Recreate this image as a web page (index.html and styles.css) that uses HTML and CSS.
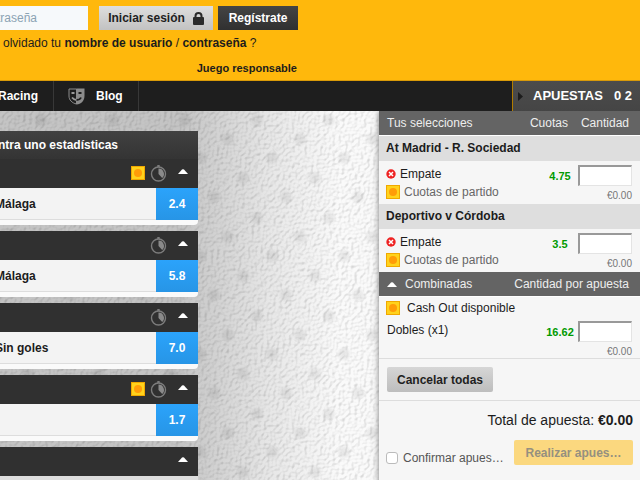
FILE: index.html
```html
<!DOCTYPE html>
<html lang="es">
<head>
    <meta charset="UTF-8">
    <title>Apuestas</title>
    <link rel="stylesheet" href="styles.css">
</head>
<body>
<svg class="defs" width="0" height="0" aria-hidden="true">
    <symbol id="cash" viewBox="0 0 14 14">
        <rect width="14" height="14" fill="#f0a800"/>
        <rect x="1" y="1" width="12" height="12" fill="#ffd21c"/>
        <circle cx="7" cy="7" r="4" fill="#ff9c08"/>
    </symbol>
    <symbol id="clock" viewBox="0 0 17 17">
        <circle cx="8.5" cy="9" r="7" fill="none" stroke="#7c7c7c" stroke-width="1.4"/>
        <path d="M7.3 0h2.4v2H7.3z" fill="#7c7c7c"/>
        <path d="M8.5 9V3.6A5.4 5.4 0 0 1 12.2 13z" fill="#8a8a8a"/>
    </symbol>
    <symbol id="up" viewBox="0 0 10 5"><path d="M0 5l4-4.400q1-.9 2 0L10 5z" fill="#fff"/></symbol>
    <symbol id="remove" viewBox="0 0 10 10">
        <circle cx="5" cy="5" r="4.700" fill="#ee2222"/>
        <path d="M3 3l4 4M7 3l-4 4" stroke="#fff" stroke-width="1.500"/>
    </symbol>
</svg>

<header class="header">
    <form class="login">
        <input class="password" type="text" placeholder="Contraseña" aria-label="Contraseña">
        <button class="btn btn-login" type="button">Iniciar sesión
            <svg width="11" height="13" viewBox="0 0 11 13"><path d="M2.500 6V4a3 3 0 0 1 6 0v2" fill="none" stroke="#2a2a2a" stroke-width="2"/><rect y="5" width="11" height="8" rx="1" fill="#2a2a2a"/></svg>
        </button>
        <button class="btn btn-join" type="button">Regístrate</button>
    </form>
    <p class="forgot">olvidado tu <a href="#">nombre de usuario</a> / <a href="#">contraseña</a> ?</p>
    <p class="responsible"><a href="#">Juego responsable</a></p>
</header>

<nav class="nav">
    <a class="nav-item" href="#">Racing</a>
    <a class="nav-item" href="#">
        <svg width="17" height="17" viewBox="0 0 17 17">
            <path d="M1 1h7.500v15C4 15 1 12 1 8z" fill="#1e1e1e" stroke="#8c8c8c"/>
            <path d="M8.500.5h8V8c0 5-3.500 8-8 8.500z" fill="#8c8c8c"/>
            <path d="M3.500 5h3M4 9.500q2 2.500 4.500 2.500" fill="none" stroke="#9a9a9a" stroke-width="1.800"/>
            <path d="M10.500 5h3M8.500 12q3.500 0 4.500-2.500" fill="none" stroke="#1e1e1e" stroke-width="1.800"/>
        </svg>
        Blog
    </a>
    <a class="nav-slip" href="#">
        <svg width="5" height="9" viewBox="0 0 5 9"><path d="M0 0l5 4.500L0 9z" fill="#1c1c1c"/></svg>
        <span class="nav-slip-title">APUESTAS</span>
        <span>0 2</span>
    </a>
</nav>

<div class="main">
    <div class="markets">
        <h2 class="markets-title">Contra uno estadísticas</h2>
        <section class="market">
            <div class="market-head">
                <svg width="14" height="14"><use href="#cash"/></svg>
                <svg width="17" height="17"><use href="#clock"/></svg>
                <svg class="up" width="10" height="5"><use href="#up"/></svg>
            </div>
            <div class="market-row"><span>Málaga</span><button class="odds" type="button">2.4</button></div>
        </section>
        <section class="market">
            <div class="market-head">
                <svg width="17" height="17"><use href="#clock"/></svg>
                <svg class="up" width="10" height="5"><use href="#up"/></svg>
            </div>
            <div class="market-row"><span>Málaga</span><button class="odds" type="button">5.8</button></div>
        </section>
        <section class="market">
            <div class="market-head">
                <svg width="17" height="17"><use href="#clock"/></svg>
                <svg class="up" width="10" height="5"><use href="#up"/></svg>
            </div>
            <div class="market-row"><span>Sin goles</span><button class="odds" type="button">7.0</button></div>
        </section>
        <section class="market">
            <div class="market-head">
                <svg width="14" height="14"><use href="#cash"/></svg>
                <svg width="17" height="17"><use href="#clock"/></svg>
                <svg class="up" width="10" height="5"><use href="#up"/></svg>
            </div>
            <div class="market-row"><span></span><button class="odds" type="button">1.7</button></div>
        </section>
        <section class="market market-last">
            <div class="market-head">
                <svg class="up" width="10" height="5"><use href="#up"/></svg>
            </div>
        </section>
    </div>

    <aside class="slip">
        <div class="slip-bar">
            <span class="grow">Tus selecciones</span><span>Cuotas</span><span>Cantidad</span>
        </div>
        <h3 class="event">At Madrid - R. Sociedad</h3>
        <div class="pick">
            <div class="pick-info">
                <p><svg width="10" height="10"><use href="#remove"/></svg>Empate</p>
                <p class="muted"><svg width="14" height="14"><use href="#cash"/></svg>Cuotas de partido</p>
            </div>
            <span class="price">4.75</span>
            <div class="stake"><input type="text" aria-label="Cantidad At Madrid - R. Sociedad"><span>€0.00</span></div>
        </div>
        <h3 class="event">Deportivo v Córdoba</h3>
        <div class="pick">
            <div class="pick-info">
                <p><svg width="10" height="10"><use href="#remove"/></svg>Empate</p>
                <p class="muted"><svg width="14" height="14"><use href="#cash"/></svg>Cuotas de partido</p>
            </div>
            <span class="price">3.5</span>
            <div class="stake"><input type="text" aria-label="Cantidad Deportivo v Córdoba"><span>€0.00</span></div>
        </div>
        <div class="slip-bar">
            <svg width="10" height="5"><use href="#up"/></svg>
            <span class="grow">Combinadas</span><span>Cantidad por apuesta</span>
        </div>
        <p class="cashout"><svg width="14" height="14"><use href="#cash"/></svg>Cash Out disponible</p>
        <div class="pick pick-multi">
            <div class="pick-info"><p>Dobles (x1)</p></div>
            <span class="price">16.62</span>
            <div class="stake"><input type="text" aria-label="Cantidad dobles"><span>€0.00</span></div>
        </div>
        <div class="cancel"><button class="btn btn-cancel" type="button">Cancelar todas</button></div>
        <p class="total">Total de apuesta: <b>€0.00</b></p>
        <div class="confirm">
            <label><input type="checkbox">Confirmar apues…</label>
            <button class="btn btn-place" type="button">Realizar apues…</button>
        </div>
    </aside>
</div>
</body>
</html>
```

FILE: styles.css
```css
*{box-sizing: border-box;margin: 0;padding: 0;}
html{height: 100%;overflow: hidden;}
body{min-height: 100%;display: flex;flex-direction: column;font: 12px/16px "Liberation Sans", Arial, sans-serif;color: #1c1c1c;background: #f6f6f6;}
a{color: inherit;text-decoration: none;}
svg{display: block;flex: none;}
.defs{position: absolute;}
button, input{font: inherit;color: inherit;}

/* header */
.header{height: 81px;padding-top: 6px;background: #ffb80c;border-bottom: 1px solid #d99a08;}
.login{display: flex;gap: 11px;margin-left: -48px;}
.password{width: 136px;height: 24px;padding-left: 23px;border: 0;background: #f6f9fb;}
.password::placeholder{color: #8ba3b3;opacity: 1;}
.btn{display: flex;align-items: center;justify-content: center;height: 24px;border: 0;font-weight: bold;}
.btn-login{gap: 8px;width: 114px;background: linear-gradient(#dedede, #c2c2c2);color: #1f1f1f;}
.btn-join{width: 80px;margin-left: -6px;background: linear-gradient(#444, #303030);color: #fff;}
.forgot{margin: 5px 0 0 3px;}
.forgot a{font-weight: bold;}
.responsible{width: 297px;margin-top: 9px;font-size: 11px;font-weight: bold;text-align: right;}

/* nav */
.nav{display: flex;height: 30px;background: #1e1e1e;color: #fff;font-weight: bold;}
.nav-item{display: flex;align-items: center;gap: 11px;padding: 0 15px 0 14px;border-right: 1px solid #383838;}
.nav-item:first-child{margin-left: -16px;}
.nav-slip{display: flex;align-items: center;width: 128px;margin-left: auto;padding: 0 8px 0 5px;border-left: 1px solid #b07c00;background: linear-gradient(#4c4c4c, #454545);font-size: 13px;}
.nav-slip-title{margin: 0 auto 0 10px;}

/* main */
.main{flex: 1;display: flex;justify-content: space-between;overflow: hidden;background:
    url("data:image/svg+xml,%3Csvg xmlns='http://www.w3.org/2000/svg' width='72' height='98'%3E%3Cdefs%3E%3CradialGradient id='g'%3E%3Cstop stop-color='%23bbb' stop-opacity='.3'/%3E%3Cstop offset='.6' stop-color='%23ccc' stop-opacity='.25'/%3E%3Cstop offset='1' stop-color='%23ddd' stop-opacity='0'/%3E%3C/radialGradient%3E%3C/defs%3E%3Cg fill='url(%23g)'%3E%3Ccircle cx='41' cy='9' r='8'/%3E%3Ccircle cx='12' cy='28' r='8'/%3E%3Ccircle cx='56' cy='47' r='8'/%3E%3Ccircle cx='27' cy='67' r='8'/%3E%3Ccircle cx='70' cy='86' r='8'/%3E%3Ccircle cx='-2' cy='86' r='8'/%3E%3C/g%3E%3C/svg%3E"),
    url("data:image/svg+xml,%3Csvg xmlns='http://www.w3.org/2000/svg' width='300' height='300'%3E%3Cfilter id='n' x='0' y='0' width='1' height='1' color-interpolation-filters='sRGB'%3E%3CfeTurbulence type='fractalNoise' baseFrequency='.32' numOctaves='1' seed='4' stitchTiles='stitch'/%3E%3CfeDiffuseLighting surfaceScale='1' diffuseConstant='1.1' lighting-color='%23fff'%3E%3CfeDistantLight azimuth='225' elevation='62'/%3E%3C/feDiffuseLighting%3E%3C/filter%3E%3Crect width='300' height='300' filter='url(%23n)' opacity='.5'/%3E%3C/svg%3E"),
    linear-gradient(90deg, #c4c4c4 180px, #e7e7e7 270px, #fafafa 340px);background-blend-mode: multiply;}
.markets{width: 198px;padding-top: 20px;overflow: hidden;}
.markets-title{height: 28px;margin-left: -18px;font-size: 12px;line-height: 28px;color: #fff;background: linear-gradient(#414141, #343434);}
.market{margin: 0 0 6px -5px;border-radius: 0 0 4px 4px;background: #fafafa;overflow: hidden;}
.market-head{display: flex;align-items: center;justify-content: flex-end;gap: 5px;height: 29px;padding: 0 10px 1px 0;background: #303030;}
.up{margin: 0 0 4px 6px;}
.market-row{display: flex;align-items: center;justify-content: space-between;height: 32px;margin-bottom: 5px;font-weight: bold;background: #f3f3f3;border-bottom: 1px solid #ddd;}
.odds{width: 42px;height: 32px;border: 0;background: linear-gradient(#2ba3fb, #2795e6);color: #fff;font-weight: bold;}
.market-last{height: 40px;background: #ddd;}

/* slip */
.slip{width: 261px;background: #f6f6f6;box-shadow: 0 0 6px #777;}
.slip-bar{display: flex;align-items: center;gap: 13px;height: 25px;padding: 0 11px 0 8px;background: #646464;border-bottom: 1px solid #fff;color: #eee;}
.slip-bar svg{margin-right: -5px;}
.grow{flex: 1;}
.event{height: 25px;padding-left: 7px;font-size: 12px;line-height: 24px;background: #dedede;}
.pick{display: flex;height: 43px;padding: 4px 8px 0 7px;}
.pick-info{flex: 1;}
.pick p{display: flex;align-items: center;gap: 4px;height: 18px;}
.pick .muted{color: #666;}
.price{width: 36px;margin-top: 3px;font-size: 11px;font-weight: bold;text-align: center;color: #009a00;}
.stake{width: 54px;font-size: 10px;line-height: 16px;text-align: right;color: #777;}
.stake input{display: block;width: 54px;height: 21px;padding: 0 2px;border: 1px solid #e4e4e4;border-top: 2px solid #999;border-left: 2px solid #999;background: #fff;}
.stake span{display: block;margin-top: 2px;}
.cashout{display: flex;align-items: center;gap: 7px;height: 21px;padding-left: 7px;}
.pick-multi{padding-left: 8px;padding-top: 3px;height: 41px;border-bottom: 1px solid #ddd;}
.cancel{height: 42px;padding: 8px;border-bottom: 1px solid #ddd;}
.btn-cancel{width: 106px;height: 25px;border-radius: 2px;background: linear-gradient(#d6d6d6, #bdbdbd);color: #1f1f1f;}
.total{padding: 11px 7px 12px;font-size: 14px;text-align: right;}
.confirm{display: flex;justify-content: space-between;align-items: flex-start;padding: 0 7px;}
.confirm label{display: flex;align-items: center;gap: 5px;padding-top: 10px;color: #555;}
.confirm input{appearance: none;width: 12px;height: 12px;border: 1px solid #bbb;border-radius: 3px;background: #fff;}
.btn-place{width: 119px;height: 25px;border-radius: 2px;background: #fbd87f;color: #95907f;}
```
